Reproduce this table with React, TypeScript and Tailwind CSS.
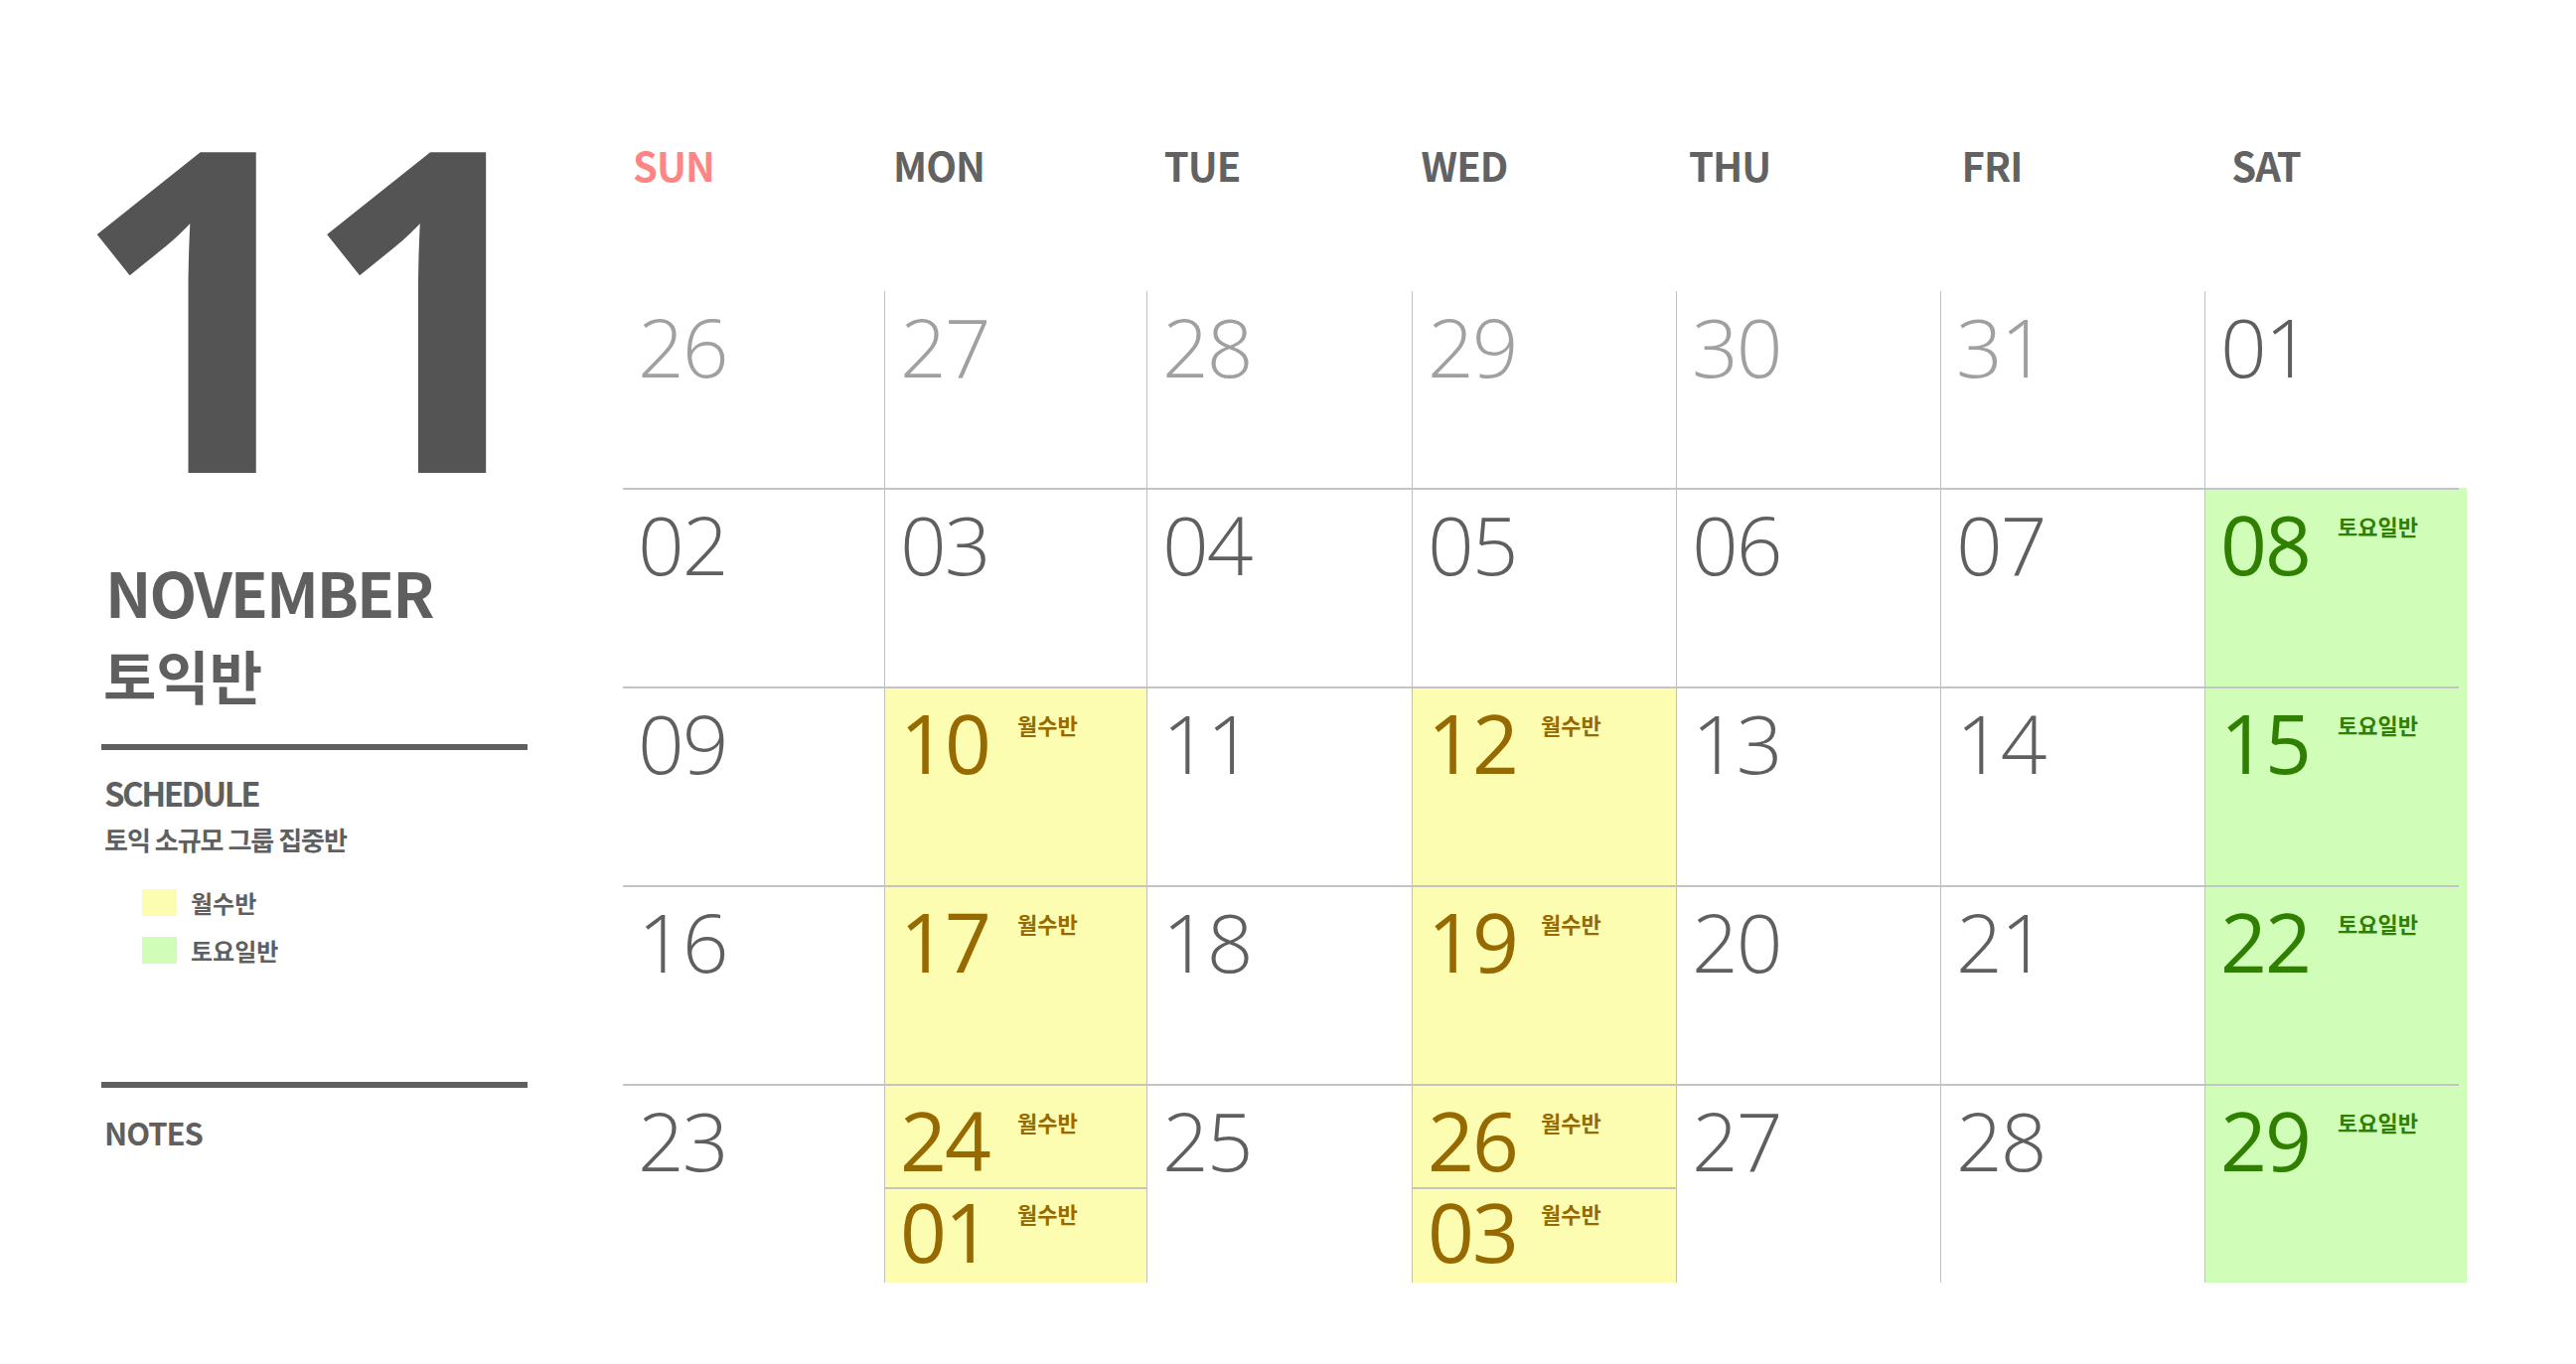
import React from 'react';

type Kind = 'prev' | 'cur' | 'mon' | 'sat';

interface Day {
  n: string;
  kind: Kind;
  next?: string;
}

const HEADERS = ['SUN', 'MON', 'TUE', 'WED', 'THU', 'FRI', 'SAT'];
// small per-column nudges so the labels sit where the print has them
const HEADER_POS = ['ml-[-2px]', 'ml-[2px]', 'ml-[3px]', 'ml-0', 'ml-[1px]', 'ml-[-1px]', 'ml-[9px]'];

const d = (n: string, kind: Kind = 'cur', next?: string): Day => ({ n, kind, next });

const WEEKS: Day[][] = [
  [d('26', 'prev'), d('27', 'prev'), d('28', 'prev'), d('29', 'prev'), d('30', 'prev'), d('31', 'prev'), d('01')],
  [d('02'), d('03'), d('04'), d('05'), d('06'), d('07'), d('08', 'sat')],
  [d('09'), d('10', 'mon'), d('11'), d('12', 'mon'), d('13'), d('14'), d('15', 'sat')],
  [d('16'), d('17', 'mon'), d('18'), d('19', 'mon'), d('20'), d('21'), d('22', 'sat')],
  [d('23'), d('24', 'mon', '01'), d('25'), d('26', 'mon', '03'), d('27'), d('28'), d('29', 'sat')],
];

const numColor: Record<Kind, string> = {
  prev: 'font-light text-[#a0a0a0]',
  cur: 'font-light text-[#5f5f5f]',
  mon: 'font-normal text-[#966a00]',
  sat: 'font-normal text-[#2f7f00]',
};

const cellBg: Record<Kind, string> = {
  prev: '',
  cur: '',
  mon: 'bg-[#fdfdb2]',
  sat: 'bg-[#d0fdb8]',
};

const DayNum = ({ n, kind, col, top = 'pt-[13px]' }: { n: string; kind: Kind; col: number; top?: string }) => {
  const label = kind === 'mon' ? '월수반' : kind === 'sat' ? '토요일반' : null;
  return (
    <div className={`flex items-start pl-[15px] ${top}`}>
      <span
        className={`${col === 3 ? 'w-[114px]' : 'w-[118px]'} shrink-0 font-['Open_Sans',sans-serif] text-[82px] leading-none tracking-[-2px] ${numColor[kind]}`}
      >
        {n}
      </span>
      {label && (
        <span
          className={`mt-[12px] font-['Noto_Sans_CJK_KR',sans-serif] text-[22px] font-bold leading-none ${
            kind === 'mon' ? 'text-[#966a00]' : 'text-[#2f7f00]'
          }`}
        >
          {label}
        </span>
      )}
    </div>
  );
};

const Cell = ({ day, col, first }: { day: Day; col: number; first: boolean }) => {
  const border = col > 0 ? 'border-l border-[#c0c0c0]' : '';
  if (first) {
    return (
      <div className={`h-[198px] ${border}`}>
        <DayNum n={day.n} kind={day.kind} col={col} top="pt-[14px]" />
      </div>
    );
  }
  return (
    <div className={`flex flex-col ${border} ${cellBg[day.kind]}`}>
      <div className={`h-[2px] bg-[#c4c4c4] ${col === 6 ? 'w-[255px]' : 'w-full'}`} />
      {day.next ? (
        <>
          <div className="h-[102px]">
            <DayNum n={day.n} kind={day.kind} col={col} />
          </div>
          <div className="h-[2px] w-full bg-[#c4c4c4]" />
          <div className="h-[94px]">
            <DayNum n={day.next} kind={day.kind} col={col} top="pt-[1px]" />
          </div>
        </>
      ) : (
        <div className="h-[198px]">
          <DayNum n={day.n} kind={day.kind} col={col} />
        </div>
      )}
    </div>
  );
};

const COLS = 'grid grid-cols-[263px_264px_267px_266px_266px_266px_264px]';

export default function App() {
  return (
    <div className="w-[2593px] h-[1373px] bg-white flex overflow-hidden text-[#5f5f5f]">
      {/* left panel */}
      <div className="w-[627px] shrink-0 flex flex-col pl-[104px] pt-[75px]">
        <div className="-ml-[33px] flex font-['Open_Sans',sans-serif] font-bold text-[452px] leading-[452px] text-[#545454]">
          <span>1</span>
          <span className="-ml-[27px]">1</span>
        </div>
        <div className="mt-[37px] ml-[2px] font-['Noto_Sans_CJK_KR',sans-serif] font-bold text-[62px] leading-none tracking-[-2px]">
          NOVEMBER
        </div>
        <div className="mt-[24px] font-['Noto_Sans_CJK_KR',sans-serif] font-bold text-[58px] leading-none">
          토익반
        </div>
        <div className="mt-[41px] -ml-[2px] h-[6px] w-[429px] bg-[#5f5f5f]" />
        <div className="mt-[27px] ml-[1px] font-['Noto_Sans_CJK_KR',sans-serif] font-bold text-[33px] leading-none tracking-[-2.5px]">
          SCHEDULE
        </div>
        <div className="mt-[17px] ml-[1px] font-['Noto_Sans_CJK_KR',sans-serif] font-bold text-[26px] leading-none tracking-[-1px]">
          토익 소규모 그룹 집중반
        </div>
        <div className="mt-[37px] flex flex-col gap-[21px] pl-[39px]">
          <div className="flex items-center gap-[14px]">
            <div className="h-[27px] w-[35px] bg-[#fdfdb2]" />
            <span className="font-['Noto_Sans_CJK_KR',sans-serif] font-bold text-[24px] leading-none">월수반</span>
          </div>
          <div className="flex items-center gap-[14px]">
            <div className="h-[27px] w-[35px] bg-[#d0fdb8]" />
            <span className="font-['Noto_Sans_CJK_KR',sans-serif] font-bold text-[24px] leading-none">토요일반</span>
          </div>
        </div>
        <div className="mt-[119px] -ml-[2px] h-[6px] w-[429px] bg-[#5f5f5f]" />
        <div className="mt-[29px] ml-[1px] font-['Noto_Sans_CJK_KR',sans-serif] font-bold text-[31px] leading-none tracking-[-1px]">
          NOTES
        </div>
      </div>

      {/* calendar */}
      <div className="w-[1856px] shrink-0 flex flex-col pt-[146px]">
        <div className={`${COLS} h-[147px]`}>
          {HEADERS.map((h, i) => (
            <div key={h} className={`w-[106px] text-center ${HEADER_POS[i]}`}>
              <span
                className={`font-['Noto_Sans_CJK_KR',sans-serif] font-bold text-[40px] leading-none tracking-[-1px] ${
                  i === 0 ? 'text-[#ff8585]' : 'text-[#626262]'
                }`}
              >
                {h}
              </span>
            </div>
          ))}
        </div>
        {WEEKS.map((week, r) => (
          <div key={r} className={COLS}>
            {week.map((day, c) => (
              <Cell key={c} day={day} col={c} first={r === 0} />
            ))}
          </div>
        ))}
      </div>
    </div>
  );
}
